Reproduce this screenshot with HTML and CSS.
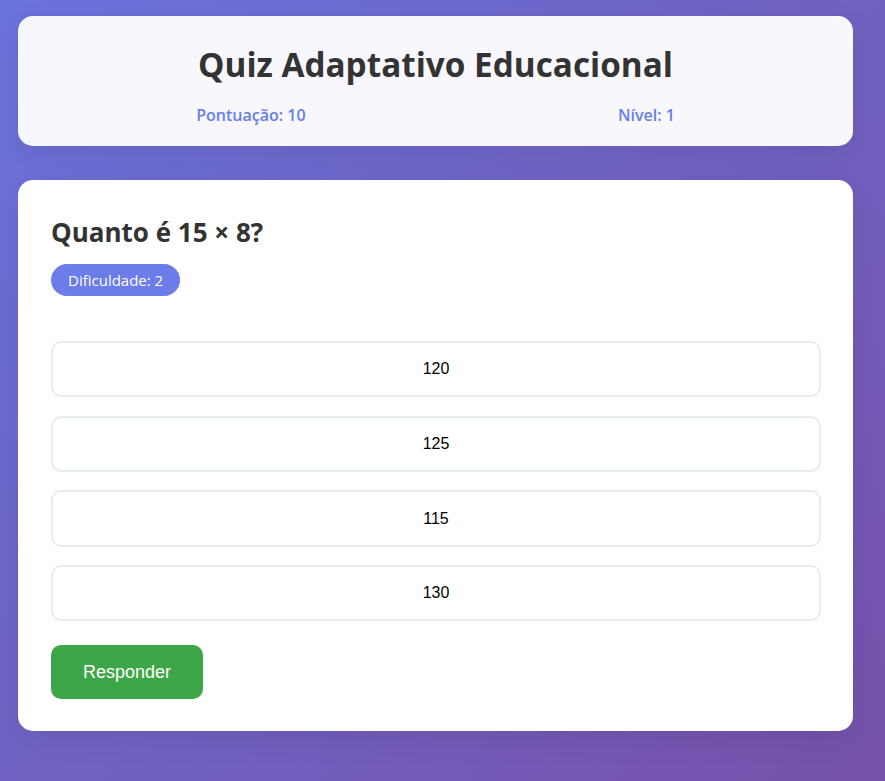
FILE: index.html
```html
<!DOCTYPE html>
<html lang="pt">
<head>
<meta charset="utf-8">
<title>Quiz Adaptativo Educacional</title>
<link rel="stylesheet" href="styles.css">
</head>
<body>
<div class="container">
  <header class="header">
    <h1 class="title">Quiz Adaptativo Educacional</h1>
    <div class="stats">
      <span class="stat">Pontuação: 10</span>
      <span class="stat">Nível: 1</span>
    </div>
  </header>
  <main class="quiz-card">
    <h2 class="question">Quanto é 15 × 8?</h2>
    <span class="badge">Dificuldade: 2</span>
    <div class="options">
      <button class="option">120</button>
      <button class="option">125</button>
      <button class="option">115</button>
      <button class="option">130</button>
    </div>
    <button class="submit">Responder</button>
  </main>
</div>
</body>
</html>
```
FILE: styles.css
```css
* { box-sizing: border-box; }
html, body { margin: 0; padding: 0; }
body {
  min-height: 100vh;
  background: linear-gradient(135deg, #6a73dc 0%, #7651aa 100%);
  font-family: "Open Sans", "Noto Sans", sans-serif;
  color: #333;
}
.container {
  width: 835px;
  margin: 0 0 0 18px;
  padding: 16px 0 50px;
}
.header {
  background: rgba(255, 255, 255, 0.95);
  border-radius: 15px;
  padding: 25px 22px 20px;
  text-align: center;
  box-shadow: 0 8px 30px rgba(0, 0, 0, 0.08);
  margin-bottom: 34px;
}
.title {
  margin: 0;
  font-size: 33.3px;
  font-weight: 700;
  line-height: 46px;
  color: #333;
}
.stats {
  display: flex;
  justify-content: space-around;
  margin-top: 17px;
  font-size: 16px;
  font-weight: 600;
  color: #667eea;
  line-height: 22px;
}
.quiz-card {
  background: #fff;
  border-radius: 15px;
  padding: 32px 32px 32px 33px;
  box-shadow: 0 8px 30px rgba(0, 0, 0, 0.08);
}
.question {
  margin: 0 0 12px;
  font-size: 26px;
  font-weight: 700;
  line-height: 40px;
  color: #333;
}
.badge {
  display: inline-block;
  background: #6c7ce9;
  color: #fff;
  font-size: 15px;
  line-height: 20px;
  padding: 6px 17px;
  border-radius: 16px;
}
.options {
  display: flex;
  flex-direction: column;
  gap: 18.3px;
  margin-top: 45px;
}
.option {
  display: block;
  width: 100%;
  height: 56.4px;
  background: #fff;
  border: 2px solid #e9ecef;
  border-radius: 10px;
  font-family: "Liberation Sans", Arial, sans-serif;
  font-size: 16px;
  color: #000;
  cursor: pointer;
}
.submit {
  display: block;
  margin-top: 24px;
  width: 152px;
  height: 54px;
  background: #3da647;
  border: none;
  border-radius: 10px;
  color: #fff;
  font-family: "Liberation Sans", Arial, sans-serif;
  font-size: 18px;
  cursor: pointer;
}
```
